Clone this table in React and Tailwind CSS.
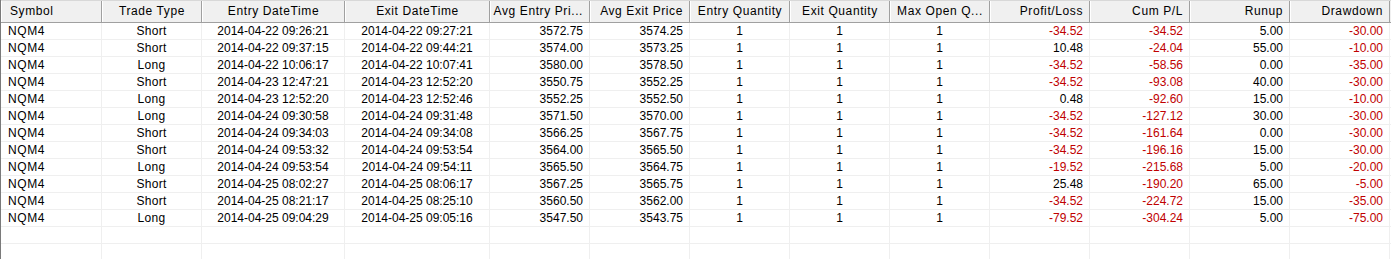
const cols = [
  { label: 'Symbol', w: 'w-[101px]', align: 'text-left pl-[7px] tracking-[0.6px]', hAlign: 'text-left pl-[8px]' },
  { label: 'Trade Type', w: 'w-[100px]', align: 'text-center tracking-[0.3px]', hAlign: 'text-center' },
  { label: 'Entry DateTime', w: 'w-[143px]', align: 'text-center', hAlign: 'text-center' },
  { label: 'Exit DateTime', w: 'w-[145px]', align: 'text-center', hAlign: 'text-center' },
  { label: 'Avg Entry Pri...', w: 'w-[100px]', align: 'text-right pr-[6px]', hAlign: 'text-right pr-[6px]' },
  { label: 'Avg Exit Price', w: 'w-[100px]', align: 'text-right pr-[6px]', hAlign: 'text-right pr-[6px]' },
  { label: 'Entry Quantity', w: 'w-[100px]', align: 'text-center', hAlign: 'text-center' },
  { label: 'Exit Quantity', w: 'w-[100px]', align: 'text-center', hAlign: 'text-center' },
  { label: 'Max Open Q...', w: 'w-[100px]', align: 'text-center', hAlign: 'text-center' },
  { label: 'Profit/Loss', w: 'w-[100px]', align: 'text-right pr-[6px]', hAlign: 'text-right pr-[6px]' },
  { label: 'Cum P/L', w: 'w-[100px]', align: 'text-right pr-[6px]', hAlign: 'text-right pr-[6px]' },
  { label: 'Runup', w: 'w-[100px]', align: 'text-right pr-[6px]', hAlign: 'text-right pr-[6px]' },
  { label: 'Drawdown', w: 'w-[100px]', align: 'text-right pr-[6px]', hAlign: 'text-right pr-[6px]' },
]

const trades = [
  ['Short', '2014-04-22 09:26:21', '2014-04-22 09:27:21', '3572.75', '3574.25', '-34.52', '-34.52', '5.00', '-30.00'],
  ['Short', '2014-04-22 09:37:15', '2014-04-22 09:44:21', '3574.00', '3573.25', '10.48', '-24.04', '55.00', '-10.00'],
  ['Long', '2014-04-22 10:06:17', '2014-04-22 10:07:41', '3580.00', '3578.50', '-34.52', '-58.56', '0.00', '-35.00'],
  ['Short', '2014-04-23 12:47:21', '2014-04-23 12:52:20', '3550.75', '3552.25', '-34.52', '-93.08', '40.00', '-30.00'],
  ['Long', '2014-04-23 12:52:20', '2014-04-23 12:52:46', '3552.25', '3552.50', '0.48', '-92.60', '15.00', '-10.00'],
  ['Long', '2014-04-24 09:30:58', '2014-04-24 09:31:48', '3571.50', '3570.00', '-34.52', '-127.12', '30.00', '-30.00'],
  ['Short', '2014-04-24 09:34:03', '2014-04-24 09:34:08', '3566.25', '3567.75', '-34.52', '-161.64', '0.00', '-30.00'],
  ['Short', '2014-04-24 09:53:32', '2014-04-24 09:53:54', '3564.00', '3565.50', '-34.52', '-196.16', '15.00', '-30.00'],
  ['Long', '2014-04-24 09:53:54', '2014-04-24 09:54:11', '3565.50', '3564.75', '-19.52', '-215.68', '5.00', '-20.00'],
  ['Short', '2014-04-25 08:02:27', '2014-04-25 08:06:17', '3567.25', '3565.75', '25.48', '-190.20', '65.00', '-5.00'],
  ['Short', '2014-04-25 08:21:17', '2014-04-25 08:25:10', '3560.50', '3562.00', '-34.52', '-224.72', '15.00', '-35.00'],
  ['Long', '2014-04-25 09:04:29', '2014-04-25 09:05:16', '3547.50', '3543.75', '-79.52', '-304.24', '5.00', '-75.00'],
]

function toCells(t) {
  return ['NQM4', t[0], t[1], t[2], t[3], t[4], '1', '1', '1', t[5], t[6], t[7], t[8]]
}

export default function App() {
  const rows = trades.map(toCells)
  const empty = Array(13).fill('')
  return (
    <div className="w-[1393px] h-[259px] overflow-hidden bg-white text-[12px] text-black" style={{ fontFamily: '"Liberation Sans", Arial, sans-serif' }}>
      <div className="border-l border-[#7a7a7a] h-full w-[1391px]">
        {/* header */}
        <div className="flex h-[23px] bg-[#f0f0f0] border-t border-[#d8d8d8] border-b border-b-[#a0a0a0] tracking-[0.6px]">
          {cols.map((c, i) => (
            <div
              key={i}
              className={`${c.w} shrink-0 h-full leading-[20px] whitespace-nowrap overflow-hidden border-r border-r-[#a0a0a0] border-l border-l-white ${c.hAlign}`}
            >
              {c.label}
            </div>
          ))}
        </div>
        {[...rows, empty, empty].map((r, ri) => (
          <div key={ri} className="flex h-[17px] border-b border-[#efefef]">
            {r.map((v, ci) => (
              <div
                key={ci}
                className={`${cols[ci].w} shrink-0 h-full leading-[16px] whitespace-nowrap border-r border-[#efefef] ${cols[ci].align} ${ci >= 9 && v.startsWith('-') ? 'text-[#c00000]' : ''}`}
              >
                {v}
              </div>
            ))}
          </div>
        ))}
      </div>
    </div>
  )
}
